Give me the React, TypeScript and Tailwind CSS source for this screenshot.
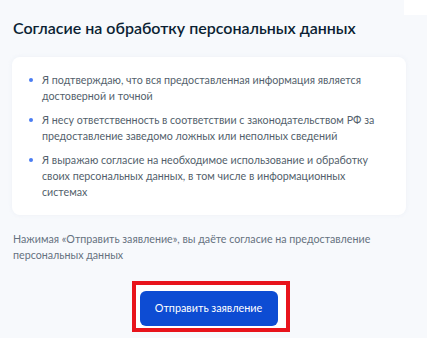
import React from "react";

const items = [
  "Я подтверждаю, что вся предоставленная информация является достоверной и точной",
  "Я несу ответственность в соответствии с законодательством РФ за предоставление заведомо ложных или неполных сведений",
  "Я выражаю согласие на необходимое использование и обработку своих персональных данных, в том числе в информационных системах",
];

const App = () => {
  return (
    <div
      className="relative w-[427px] h-[338px] overflow-hidden bg-[#f7f9fc]"
      style={{ fontFamily: "Lato, 'Noto Sans', sans-serif" }}
    >
      <div className="absolute top-0 right-0 w-[23px] h-[15px] bg-white" />
      <div className="pl-[13px] pt-[16px]">
        <h2 className="text-[16px] leading-[24px] font-semibold text-[#0b1f33]">
          Согласие на обработку персональных данных
        </h2>
      </div>
      <div className="ml-[12px] mt-[17px] w-[394px] rounded-[8px] bg-white shadow-[0_0_4px_rgba(230,235,245,0.6)] px-[16px] py-[15px]">
        <ul className="flex flex-col gap-[8px]">
          {items.map((t) => (
            <li key={t} className="flex items-start">
              <span className="mt-[6px] ml-[1px] w-[4px] h-[4px] rounded-full bg-[#4a7df2] shrink-0" />
              <span className="ml-[9px] pr-[4px] text-[10.7px] leading-[16px] text-[#535f6c]">
                {t}
              </span>
            </li>
          ))}
        </ul>
      </div>
      <p className="mt-[16px] pl-[13px] pr-[20px] text-[10.7px] leading-[16px] text-[#66727f]">
        Нажимая «Отправить заявление», вы даёте согласие на предоставление персональных данных
      </p>
      <div className="mt-[18px] flex justify-center">
        <div className="ml-[-6px] border-[4px] border-[#e8141c] bg-white pt-[6px] pb-[2px] pl-[4px] pr-[8px]">
          <button className="w-[138px] h-[35px] rounded-[6px] bg-[#0d4cd3] text-white text-[10.8px]">
            Отправить заявление
          </button>
        </div>
      </div>
    </div>
  );
};

export default App;
